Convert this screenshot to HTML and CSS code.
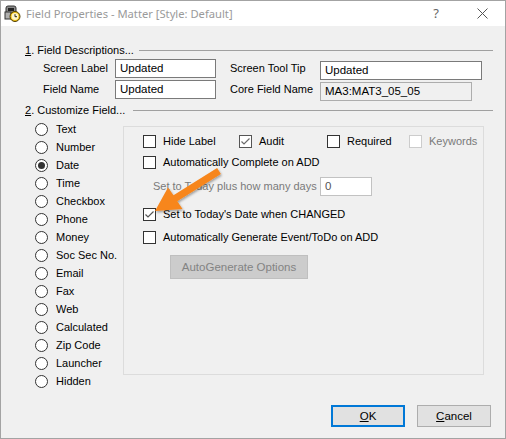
FILE: index.html
```html
<!DOCTYPE html>
<html>
<head>
<meta charset="utf-8">
<link rel="stylesheet" href="styles.css">
</head>
<body>
<div class="window">
  <div class="titlebar">
    <svg class="app-icon" width="17" height="17" viewBox="0 0 17 17">
      <rect x="2" y="1" width="10" height="11" rx="2" fill="#8c8c8c" stroke="#333" stroke-width="1"/>
      <rect x="4" y="3" width="6" height="3" fill="#222"/>
      <rect x="1" y="7" width="6" height="7" fill="#b0b0b0" stroke="#333" stroke-width="1"/>
      <circle cx="11" cy="11.5" r="5" fill="#f2c418" stroke="#4d3b00" stroke-width="1"/>
      <circle cx="11" cy="11.5" r="3.4" fill="#fff6c8"/>
      <path d="M11 9.2 V11.7 H13" fill="none" stroke="#222" stroke-width="1"/>
    </svg>
    <span class="title">Field Properties - Matter [Style: Default]</span>
    <span class="help">?</span>
    <svg class="close" width="11" height="11" viewBox="0 0 11 11">
      <path d="M0.5 0.5 L10.5 10.5 M10.5 0.5 L0.5 10.5" stroke="#555" stroke-width="1" fill="none"/>
    </svg>
  </div>

  <div class="content">
    <div class="section-head"><span><u>1</u>. Field Descriptions...</span><i class="rule"></i></div>
    <div class="desc-grid">
      <span class="lbl">Screen Label</span><div class="input">Updated</div>
      <span class="lbl">Screen Tool Tip</span><div class="input tip">Updated</div>
      <span class="lbl">Field Name</span><div class="input">Updated</div>
      <span class="lbl">Core Field Name</span><div class="input core">MA3:MAT3_05_05</div>
    </div>

    <div class="section-head second"><span><u>2</u>. Customize Field...</span><i class="rule"></i></div>

    <div class="customize">
      <ul class="radios">
        <li><span class="radio"></span>Text</li>
        <li><span class="radio"></span>Number</li>
        <li><span class="radio on"></span>Date</li>
        <li><span class="radio"></span>Time</li>
        <li><span class="radio"></span>Checkbox</li>
        <li><span class="radio"></span>Phone</li>
        <li><span class="radio"></span>Money</li>
        <li><span class="radio"></span>Soc Sec No.</li>
        <li><span class="radio"></span>Email</li>
        <li><span class="radio"></span>Fax</li>
        <li><span class="radio"></span>Web</li>
        <li><span class="radio"></span>Calculated</li>
        <li><span class="radio"></span>Zip Code</li>
        <li><span class="radio"></span>Launcher</li>
        <li><span class="radio"></span>Hidden</li>
      </ul>

      <div class="group">
        <div class="row r1">
          <span class="opt w1"><span class="cb"></span>Hide Label</span>
          <span class="opt w2"><span class="cb checked light"><svg width="11" height="11" viewBox="0 0 11 11"><path d="M1.5 5.5 L4 8 L9.5 2.5" fill="none" stroke="#6b6b6b" stroke-width="1.2"/></svg></span>Audit</span>
          <span class="opt w3"><span class="cb"></span>Required</span>
          <span class="opt disabled"><span class="cb"></span>Keywords</span>
        </div>
        <div class="row r2">
          <span class="opt"><span class="cb"></span>Automatically Complete on ADD</span>
        </div>
        <div class="row r3">
          <span class="days-label">Set to Today plus how many days</span>
          <div class="input days">0</div>
        </div>
        <div class="row r4">
          <span class="opt"><span class="cb checked"><svg width="11" height="11" viewBox="0 0 11 11"><path d="M1.5 5.5 L4 8 L9.5 2.5" fill="none" stroke="#555" stroke-width="1.2"/></svg></span>Set to Today's Date when CHANGED</span>
        </div>
        <div class="row r5">
          <span class="opt"><span class="cb"></span>Automatically Generate Event/ToDo on ADD</span>
        </div>
        <div class="btn disabled-btn">AutoGenerate Options</div>
      </div>
    </div>

    <div class="buttons">
      <div class="btn default"><u>O</u>K</div>
      <div class="btn"><u>C</u>ancel</div>
    </div>
  </div>

  <svg class="arrow" width="506" height="439" viewBox="0 0 506 439">
    <defs>
      <filter id="sh" x="-20%" y="-20%" width="140%" height="140%">
        <feDropShadow dx="1" dy="1.5" stdDeviation="1.2" flood-color="#000" flood-opacity="0.35"/>
      </filter>
    </defs>
    <polygon filter="url(#sh)" fill="#f7861c"
      points="217.1,168 173.5,195.3 168,187.5 155,211 182.5,209 177.3,201.3 220.9,174"/>
  </svg>
</div>
</body>
</html>
```

FILE: styles.css
```css
* {
  box-sizing: border-box;
}

body {
  margin: 0;
  font-family: "Liberation Sans", Arial, sans-serif;
  font-size: 11px;
  line-height: 13px;
  color: #000;
}

.window {
  position: relative;
  width: 506px;
  height: 439px;
  border: 1px solid #a3a3a3;
  background: #f0f0f0;
  display: flex;
  flex-direction: column;
  overflow: hidden;
}

.titlebar {
  height: 25px;
  flex: none;
  background: #fff;
  display: flex;
  align-items: center;
  padding-left: 3px;
}

.app-icon {
  margin-right: 5px;
  flex: none;
}

.title {
  flex: 1;
  font-family: "Noto Sans", sans-serif;
  font-size: 11.2px;
  color: #9a9a9a;
  white-space: nowrap;
}

.help {
  font-family: "Noto Sans", sans-serif;
  font-size: 13px;
  color: #666;
  margin-right: 38px;
}

.close {
  margin-right: 17px;
}

.content {
  flex: 1;
  display: flex;
  flex-direction: column;
  padding: 17px 12px 0 24px;
}

.section-head {
  display: flex;
  align-items: center;
  height: 14px;
  white-space: nowrap;
}

.section-head.second {
  margin-top: 4px;
}

.rule {
  flex: 1;
  height: 1px;
  background: #a0a0a0;
  margin-left: 5px;
}

.second .rule {
  margin-left: 8px;
}

.desc-grid {
  display: grid;
  grid-template-columns: 72px 115px 90px auto;
  grid-auto-rows: 19px;
  row-gap: 2px;
  margin: 2px 0 0 18px;
  align-items: center;
}

.lbl {
  white-space: nowrap;
}

.input {
  height: 19px;
  width: 101px;
  background: #fff;
  border: 1px solid #7a7a7a;
  padding: 2px 0 0 4px;
  white-space: nowrap;
  font-size: 11.5px;
}

.input.tip {
  width: 162px;
  margin-top: 3px;
}

.input.core {
  width: 152px;
  margin-top: 3px;
  background: #f0f0f0;
  border-color: #adadad;
  color: #000;
}

.customize {
  display: flex;
  align-items: flex-start;
}

.radios {
  list-style: none;
  margin: 3px 0 0 0;
  padding: 0 0 0 10px;
  width: 98px;
  flex: none;
}

.radios li {
  height: 18px;
  display: flex;
  align-items: center;
  white-space: nowrap;
}

.radio {
  width: 13px;
  height: 13px;
  border: 1px solid #333;
  border-radius: 50%;
  background: #fff;
  margin-right: 8px;
  display: flex;
  align-items: center;
  justify-content: center;
  flex: none;
}

.radio.on::after {
  content: "";
  width: 7px;
  height: 7px;
  border-radius: 50%;
  background: #333;
}

.group {
  margin-top: 9px;
  width: 361px;
  height: 249px;
  border: 1px solid #dcdcdc;
  padding: 5px 0 0 19px;
  display: flex;
  flex-direction: column;
  align-items: flex-start;
}

.row {
  display: flex;
  align-items: center;
  height: 18px;
  white-space: nowrap;
}

.r2 { margin-top: 3px; }
.r3 { margin-top: 6px; height: 19px; }
.r4 { margin-top: 9px; }
.r5 { margin-top: 5px; }

.opt {
  display: flex;
  align-items: center;
}

.w1 { width: 96px; }
.w2 { width: 88px; }
.w3 { width: 82px; }

.cb {
  width: 13px;
  height: 13px;
  border: 1px solid #333;
  background: #fff;
  margin-right: 7px;
  flex: none;
  display: flex;
  align-items: center;
  justify-content: center;
}

.cb.light {
  border-color: #555;
}

.opt.disabled {
  color: #7a7a7a;
}

.opt.disabled .cb {
  border-color: #cccccc;
}

.days-label {
  color: #7a7a7a;
  margin-left: 10px;
  width: 167px;
}

.input.days {
  width: 52px;
  border-color: #c2c2c2;
  color: #555;
}

.btn {
  height: 22px;
  width: 74px;
  background: #e1e1e1;
  border: 1px solid #adadad;
  display: flex;
  align-items: center;
  justify-content: center;
  white-space: nowrap;
  font-size: 11.5px;
}

.disabled-btn {
  margin: 9px 0 0 27px;
  width: 138px;
  height: 24px;
  background: #cccccc;
  border-color: #bfbfbf;
  color: #838383;
}

.buttons {
  display: flex;
  justify-content: flex-end;
  gap: 12px;
  margin-top: 15px;
  padding-right: 2px;
}

.btn.default {
  border: 2px solid #0078d7;
}

.arrow {
  position: absolute;
  left: -1px;
  top: -1px;
  pointer-events: none;
}
```
